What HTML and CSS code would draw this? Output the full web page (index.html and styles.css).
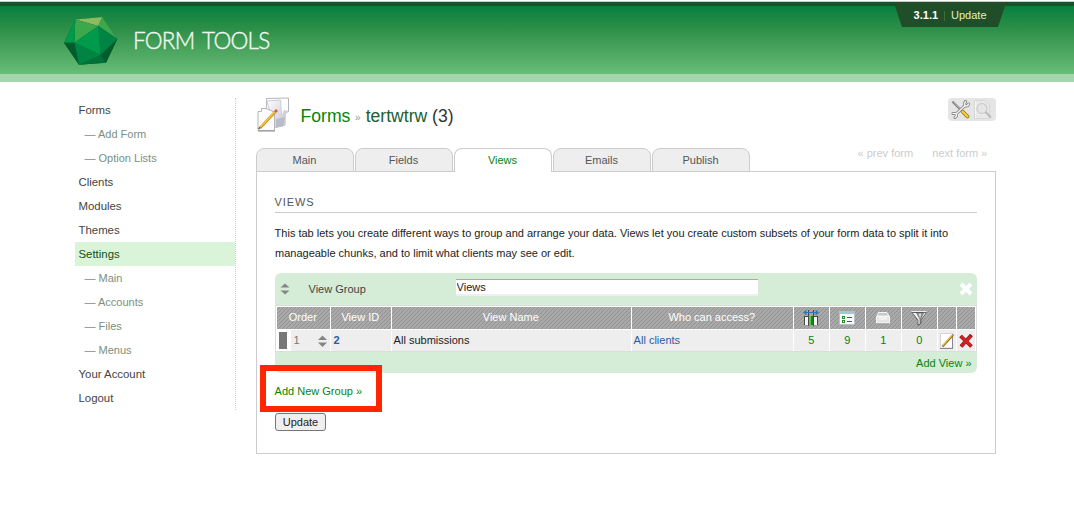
FILE: index.html
```html
<!DOCTYPE html>
<html lang="en">
<head>
<meta charset="utf-8">
<title>Form Tools - Views</title>
<link rel="stylesheet" href="styles.css">
</head>
<body>
<header class="header">
  <div class="brand">
    <svg class="gem" width="54" height="50" viewBox="0 0 54 50">
      <path fill="#00642f" d="M11.300 2.500 38.300 0 53.300 22 42 45.700 15 47.700 0 25.700z"/>
      <path fill="#8fba62" d="M11.300 2.500 38.300 0 34.300 9z"/>
      <path fill="#3da74b" d="M11.300 2.500 34.300 9 10.300 25.700zM38.300 0 53.300 22 34.300 9z"/>
      <path fill="#009a4c" d="M11.300 2.500 10.300 25.700H0zM34.300 9 36.700 38 10.300 25.700z"/>
      <path fill="#008443" d="M10.300 25.700 36.700 38 15 47.700zM34.300 9 53.300 22 36.700 38z"/>
      <path fill="#007138" d="M36.700 38 42 45.700 15 47.700z"/>
      <path fill="#005c2c" d="M10.300 25.700 15 47.700 0 25.700zM53.300 22 42 45.700 36.700 38z"/>
    </svg>
    <span class="brand-name">FORM TOOLS</span>
  </div>
  <div class="version">
    <svg class="version-bg" width="112" height="21" viewBox="0 0 112 21"><path fill="#1f4e28" d="M1 0H111L104 21H8z"/></svg>
    <b>3.1.1</b><i></i><span>Update</span>
  </div>
</header>
<div class="page">
  <nav class="menu">
    <a>Forms</a>
    <a class="sub">— Add Form</a>
    <a class="sub">— Option Lists</a>
    <a>Clients</a>
    <a>Modules</a>
    <a>Themes</a>
    <a class="current">Settings</a>
    <a class="sub">— Main</a>
    <a class="sub">— Accounts</a>
    <a class="sub">— Files</a>
    <a class="sub">— Menus</a>
    <a>Your Account</a>
    <a>Logout</a>
  </nav>
  <main class="main">
    <div class="title-row">
      <svg class="form-icon" width="34" height="36" viewBox="0 0 34 36">
        <defs><linearGradient id="paper" x1="0" y1="0" x2="1" y2="1"><stop offset="0" stop-color="#fff"/><stop offset="1" stop-color="#c3c5d3"/></linearGradient></defs>
        <path fill="#fdfdfe" stroke="#b4b4bc" d="M9.500 3.500V1.500L31.500 1V14.500L28 16V28L17 30.500 9 27z"/>
        <path fill="url(#paper)" stroke="#cdcdd9" d="M10 4 23.500 3 24.500 17.500 28 19 27 28.500 17 30z"/>
        <path fill="#b9bccb" d="M19 22 28 20 26.500 29 19 31z"/>
        <path fill="#d0d1dc" d="M27 13 31 14 28 19 25 18z"/>
        <path fill="#fcfcfe" stroke="#b4b4bb" d="M4.500 14.500V11.500H9L17.500 15V33.500H1V14.500z"/>
        <path stroke="#8d8d94" d="M1 34H18"/>
        <path stroke="#c88a20" stroke-width="2.600" d="M3 31 18 15"/>
        <path stroke="#f8c83c" stroke-width="1.600" d="M3 30.500 18 14.500"/>
        <path stroke="#d8574e" stroke-width="2.600" d="m18 15 2-2"/>
        <path stroke="#555" stroke-width="1.300" d="m1.500 32 1.700-1.700"/>
      </svg>
      <h1><a>Forms</a><small>»</small><span class="form-name">tertwtrw <em>(3)</em></span></h1>
      <div class="tools">
        <svg width="20" height="20" viewBox="0 0 20 20" fill="none">
          <path stroke="#777" stroke-width="2.200" d="M1.500 1.500 10 10"/>
          <path stroke="#ccc" stroke-width="1" d="M2 1.500 10 9.500"/>
          <path stroke="#8d7015" stroke-width="3.800" stroke-linecap="round" d="m11.500 11.500 5 5"/>
          <path stroke="#f8cf3c" stroke-width="2.300" stroke-linecap="round" d="m11.500 11.500 5 5"/>
          <g stroke-linecap="round" stroke-linejoin="round">
            <path stroke="#777" stroke-width="3" d="M5.500 13.500 13.500 6M2 13.500 5.500 13.500 5.500 16 4 17.500M14.500 1.500 13.500 3.500 14 6 16.500 5.800 17.500 4"/>
            <path stroke="#f3f3f3" stroke-width="1.600" d="M5.500 13.500 13.500 6M2 13.500 5.500 13.500 5.500 16 4 17.500M14.500 1.500 13.500 3.500 14 6 16.500 5.800 17.500 4"/>
          </g>
        </svg>
        <svg width="20" height="20" viewBox="0 0 20 20" fill="none">
          <path fill="#e9e9e9" stroke="#d6d6d6" d="M.5.500H11L15.500 5V18.500H.5z"/>
          <path stroke="#f8f8f8" d="M1.500 1V18"/>
          <circle cx="8" cy="8.500" r="5" fill="#e5e5e5" stroke="#d0d0d0" stroke-width="1.500"/>
          <path stroke="#b9b9b9" stroke-width="2" d="m11.500 12 5.500 5.500"/>
        </svg>
      </div>
    </div>
    <div class="tab-row">
      <div class="tabs"><a>Main</a><a>Fields</a><a class="on">Views</a><a>Emails</a><a>Publish</a></div>
      <div class="pager"><span>« prev form</span><span>next form »</span></div>
    </div>
    <section class="panel">
      <h2>VIEWS</h2>
      <p>This tab lets you create different ways to group and arrange your data. Views let you create custom subsets of your form data to split it into manageable chunks, and to limit what clients may see or edit.</p>
      <div class="group">
        <div class="group-head">
          <svg width="10" height="12" viewBox="0 0 10 12"><path fill="#858585" d="M5 .500 9.500 4.500H.5zM5 11.500.5 7.500H9.500z"/></svg>
          <label>View Group</label>
          <input type="text" value="Views">
          <svg class="close" width="14" height="14" viewBox="0 0 14 14"><path stroke="#fff" stroke-width="4" d="m2 2 10 10M12 2 2 12"/></svg>
        </div>
        <div class="grid">
          <div class="th">Order</div><div class="th">View ID</div><div class="th">View Name</div><div class="th">Who can access?</div>
          <div class="th pic"><svg width="16" height="16" viewBox="0 0 16 16">
            <path fill="#f6f6f6" d="M2 6H14V15H2z"/>
            <path fill="#55cc45" d="M6 6H8V15H6z"/><path fill="#138813" d="M8 6H10V15H8z"/>
            <path stroke="#484848" d="M1.500 6V15M5.500 0V16M10.500 0V16M14.500 6V15M1 6.500H5M11 6.500H15"/>
            <path stroke="#2878ba" stroke-width="1.200" d="M1 2.500H15M3.500.500 1 2.500 3.500 4.500M12.500.500 15 2.500 12.500 4.500" fill="none"/>
          </svg></div>
          <div class="th pic"><svg width="16" height="16" viewBox="0 0 16 16">
            <path fill="#f7faf8" stroke="#b4c2c6" d="M.5 1.500H15.500V14.500H.5z"/><path fill="#a5c5d8" d="M1 2H15V4H1z"/>
            <path fill="#258b28" d="M3 6H6V9H3zM3 10H6V13H3z"/><path stroke="#555" d="M8 7.500H13M8 11.500H13"/><path fill="#fff" d="M4 7H5V8H4zM4 11H5V12H4z"/>
          </svg></div>
          <div class="th pic"><svg width="16" height="16" viewBox="0 0 16 16">
            <path fill="#c8c8c8" stroke="#f5f5f5" d="M3.500 2.500H12L14 6H2z"/>
            <path fill="#e4e4e4" stroke="#f7f7f7" d="M1.500 6.500H14.500V13H1.500z"/><path fill="#f1f1f1" d="M4 7H12V10H4z"/><path stroke="#999" d="M2 14H14"/>
          </svg></div>
          <div class="th pic"><svg width="16" height="16" viewBox="0 0 16 16">
            <path fill="#858585" stroke="#555" stroke-width=".8" d="M.8 2H15.200L10 10.500V13.500L7 15.500V10.500z"/>
            <path fill="#fafafa" d="M2 3H5L8.500 9.500V14H7.500V10z"/><path fill="#d9d9d9" d="M7.500 3.500H10.500L9 8.500z"/><path fill="#eee" d="M13 3H14.500L10 9.500z"/><path stroke="#ededed" d="M.5 1.500H15.500"/><path stroke="#555" d="M3 2.500H13"/>
          </svg></div>
          <div class="th"></div><div class="th"></div>
          <div class="td order"><span class="handle"></span><span class="order-box">1<svg width="9" height="12" viewBox="0 0 9 12"><path fill="#858585" d="M4.500.500 9 5H0zM4.500 12 0 7.500H9z"/></svg></span></div>
          <div class="td id">2</div><div class="td">All submissions</div><div class="td blue">All clients</div>
          <div class="td num">5</div><div class="td num">9</div><div class="td num">1</div><div class="td num">0</div>
          <div class="td icon"><svg width="16" height="16" viewBox="0 0 16 16">
            <path fill="#fff" stroke="#d4d4d4" d="M1.500.500H13.500V15H1.500z"/><path stroke="#898989" d="M1 15.500H14M13.500 4V15.500"/>
            <path stroke="#80631a" stroke-width="2" d="M3.500 13.500 13.500 2.500"/><path stroke="#f9c440" stroke-width="1.200" d="M3.800 12.500 13.200 2.200"/><path stroke="#c96a60" stroke-width="1.800" d="m13.500 2.500 1-1.200"/>
          </svg></div>
          <div class="td icon"><svg width="14" height="14" viewBox="0 0 14 14"><path stroke="#8c1616" stroke-width="3.800" d="m1.500 2 11 10.500M12.500 1 2 12.500"/><path stroke="#d32020" stroke-width="2.600" d="m2 2 10 10M12 1.800 2.500 12"/></svg></div>
        </div>
        <div class="group-foot">Add View »</div>
      </div>
      <div class="add-group">Add New Group »<span class="marker"></span></div>
      <button>Update</button>
    </section>
  </main>
</div>
</body>
</html>
```
FILE: styles.css
```css
* { box-sizing: border-box; }
body { margin: 0; background: #fff; color: #222; font: 11px/20px "Liberation Sans", Arial, sans-serif; }
svg { display: block; flex: none; }
.header {
  position: relative;
  height: 82px;
  padding: 17px 0 0 64px;
  background: linear-gradient(#fff 0 1px, #c5cec5 1px 2px, #1f4e28 2px 6px, #07803e 6px, #2f9049 30px, #69bd77 74px, #a3d6ac 74px);
}
.brand { display: flex; }
.brand-name {
  margin: 9px 0 0 15px;
  color: #f3f8f3;
  font: 300 22.5px/30px Lato, sans-serif;
  letter-spacing: -0.75px;
  word-spacing: 3px;
  -webkit-text-stroke: 0.35px #f3f8f3;
  white-space: nowrap;
}
.version { position: absolute; top: 6px; right: 68px; width: 112px; height: 21px; display: flex; padding-left: 19.600px; line-height: 18px; color: #e4efbd; }
.version-bg { position: absolute; left: 0; top: 0; }
.version b { position: relative; color: #fff; }
.version i { position: relative; width: 1px; height: 10px; margin: 5px 6px 0; background: #3b6d34; }
.version span { position: relative; }
.page { display: flex; padding: 16px 0 0 75px; }
.menu { display: flex; flex-direction: column; width: 161px; height: 312px; border-right: 1px dotted #ccc; font-size: 11.4px; }
.menu a { height: 24px; padding-left: 3.500px; line-height: 24px; color: #444; }
.menu .sub { padding-left: 9.500px; font-size: 11px; color: #7a8f80; }
.menu .current { background: #daf4da; color: #164d16; }
.main { width: 740px; margin-left: 20px; text-indent: -0.4px; }
.title-row { display: flex; height: 50px; }
.form-icon { margin-left: 1px; margin-top: -1px; }
h1 { display: flex; margin: 6px 0 0 9.900px; font-size: 17.6px; font-weight: normal; line-height: 24px; color: #205e31; }
h1 a { color: #078307; }
h1 small { margin: 2px 5.500px 0 5px; font-size: 10px; color: #999; }
h1 em { font-style: normal; color: #333; }
.tools { display: flex; gap: 3px; width: 48px; height: 23px; margin-left: auto; padding: 2px 3px; border-radius: 4px; background: #e5e5e5; }
.tab-row { display: flex; justify-content: space-between; height: 23px; }
.tabs { display: flex; gap: 1px; height: 24px; position: relative; }
.tabs a { width: 98px; height: 24px; border: 1px solid #ccc; border-radius: 8px 8px 0 0; background: #eee; color: #555; line-height: 23px; text-align: center; text-indent: -1px; }
.tabs .on { border-bottom: 0; background: #fff; color: #078307; }
.pager { display: flex; gap: 19.500px; padding-right: 8.700px; line-height: 11px; color: #ccc; }
.panel { height: 283px; padding: 19px 18px; border: 1px solid #ccc; }
h2 { height: 22px; margin: 0 0 10px; border-bottom: 1px solid #ccc; font-size: 11px; font-weight: normal; line-height: 23px; letter-spacing: 0.9px; color: #555; }
p { height: 40px; margin: 0 0 10px; }
.group { height: 100px; border-radius: 6px; background: #d5ecd7; }
.group-head { display: flex; align-items: center; height: 32px; padding: 0 4px 0 5px; color: #444; }
.group-head label { width: 147.500px; margin-left: 18.500px; text-indent: 0; }
.group-head input { width: 302px; height: 17px; margin-bottom: 4px; padding: 1px 0 0 0.600px; border: solid; border-width: 1px 0 2px; border-color: #aaa #eeeef4 #eeeef4; background: #fff; font: 11px "Liberation Sans", Arial, sans-serif; color: #222; }
.close { margin-left: auto; }
.grid {
  display: grid;
  grid-template-columns: 53px 60px 239px 161px 35px 35px 35px 35px 18px 18px;
  grid-template-rows: 22px 21px;
  gap: 1px;
  height: 47px;
  padding: 1px;
  border: 1px solid #ddd;
  background: #fff;
}
.th {
  display: flex;
  align-items: center;
  justify-content: center;
  padding: 0 1px 2px 0;
  line-height: 20px;
  color: #fff;
  background: repeating-linear-gradient(135deg, #a9a9a9 0 1.900px, #929292 1.900px 2.828px);
}
.pic { padding-bottom: 0; }
.td { padding-left: 2px; background: #eee; line-height: 21px; }
.blue { color: #2a5d9e; }
.id { padding-left: 2.900px; color: #2a5d9e; font-weight: bold; }
.num { padding: 0; text-align: center; color: #078307; }
.icon { display: flex; align-items: center; justify-content: center; padding: 0; }
.order { display: flex; background: #fff; }
.handle { width: 8px; height: 17px; margin: 2px 4px 0 0; background: #777; }
.order-box { display: flex; flex: 1; align-items: center; justify-content: space-between; padding: 0 3px 0 2.800px; background: #eee; color: #777; }
.group-foot { padding: 1px 5.500px 0 0; color: #078307; text-align: right; }
.add-group { position: relative; width: 120px; margin-top: 8px; color: #078307; }
.marker { position: absolute; left: -15px; top: -16px; width: 122px; height: 47px; border: 6px solid #ff2600; }
button { display: block; width: 51px; height: 18px; margin-top: 12px; padding: 0; border: 1px solid #767676; border-radius: 3px; background: #efefef; font: 11px "Liberation Sans", Arial, sans-serif; color: #222; }
```
